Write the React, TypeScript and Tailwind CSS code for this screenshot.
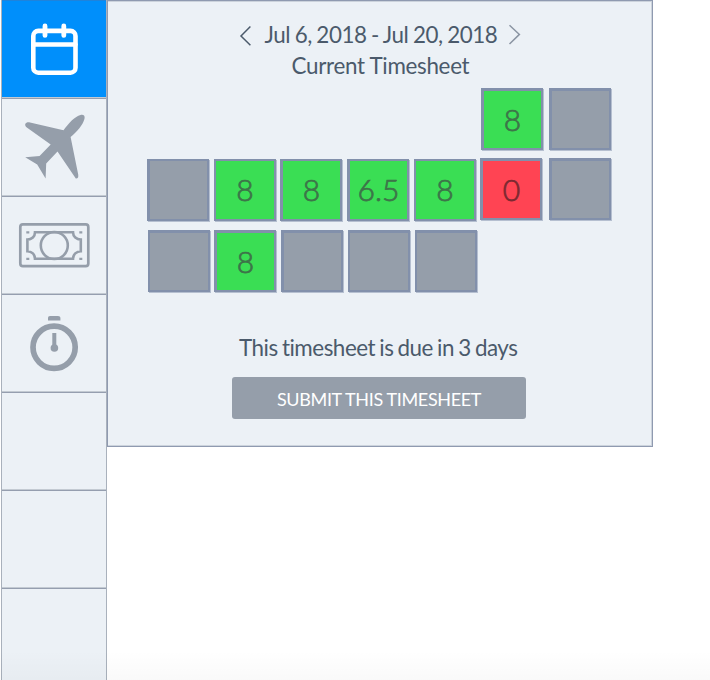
import React from "react";

type Tone = "empty" | "green" | "red";

interface Day {
  tone: Tone;
  hours?: string;
  place: string;
}

const tones: Record<Tone, string> = {
  empty: "bg-[#959eaa]",
  green: "bg-[#3ade54] text-[#3d7449]",
  red: "bg-[#ff4453] text-[#7d2931]",
};

const weeks: { place: string; days: Day[] }[] = [
  {
    place: "ml-[373px]",
    days: [
      { tone: "green", hours: "8", place: "border-2 border-l-[3px] border-t-[3px]" },
      { tone: "empty", place: "border-2 border-l-[3px] border-t-[3px] ml-[6px]" },
    ],
  },
  {
    place: "ml-[39px] mt-2",
    days: [
      { tone: "empty", place: "border-2 border-l-[3px] mt-px" },
      { tone: "green", hours: "8", place: "border-2 mt-px ml-[5px]" },
      { tone: "green", hours: "8", place: "border-2 border-l-[3px] mt-px ml-1" },
      { tone: "green", hours: "6.5", place: "border-2 border-l-[3px] mt-px ml-[5px]" },
      { tone: "green", hours: "8", place: "border-2 mt-px ml-[5px]" },
      { tone: "red", hours: "0", place: "border-2 border-l-[3px] border-t-[3px] ml-1" },
      { tone: "empty", place: "border-2 border-l-[3px] border-t-[3px] ml-[7px]" },
    ],
  },
  {
    place: "ml-10 mt-[9px]",
    days: [
      { tone: "empty", place: "border-2 border-t-[3px]" },
      { tone: "green", hours: "8", place: "border-2 border-l-[3px] border-t-[3px] ml-1" },
      { tone: "empty", place: "border-2 border-l-[3px] border-t-[3px] ml-[5px]" },
      { tone: "empty", place: "border-2 border-t-[3px] ml-[5px]" },
      { tone: "empty", place: "border-2 border-t-[3px] ml-[5px]" },
    ],
  },
];

function CalendarIcon() {
  return (
    <svg width="105" height="96" viewBox="0 0 105 96" fill="none" stroke="#fff" strokeLinecap="round">
      <rect x="31.3" y="29.9" width="42.2" height="41.8" rx="5" strokeWidth="4.6" />
      <path d="M31.5 43.4H73.5" strokeWidth="4.5" />
      <path d="M43 24.9V34.4M61.8 24.9V34.4" strokeWidth="4.8" />
    </svg>
  );
}

function PlaneIcon() {
  return (
    <svg width="105" height="96" viewBox="2 99 105 96" fill="#959eaa">
      <path d="M25.2 124.3C26 122.4 28 122 30 122.5L63.5 130.3C69 122.8 75 116.3 80.5 115C83.5 114.3 85.2 115.6 84.5 118.7C83 125 77 131.5 70.6 137L78.2 174.5C78.6 177 78 178.8 75.8 178.6L57.5 151.5L46.2 163.5L45.6 178.5L37.2 164.6L25.2 157.2L39.6 156.1L50.7 144.4L26.8 127.4C25.6 126.5 25 125.4 25.2 124.3Z" />
    </svg>
  );
}

function MoneyIcon() {
  return (
    <svg width="105" height="96" viewBox="2 197 105 96" fill="none" stroke="#959eaa">
      <rect x="20.3" y="224.3" width="68" height="41.8" rx="2.6" strokeWidth="2.7" />
      <path d="M35 232.3H73C73 236.4 76.5 239.6 80.8 239.6V251.2C76.5 251.2 73 254.6 73 258.8H35C35 254.6 31.8 251.2 27.4 251.2V239.6C31.8 239.6 35 236.4 35 232.3Z" strokeWidth="2.6" />
      <circle cx="54.3" cy="245.5" r="13.5" strokeWidth="2.6" />
      <path d="M26.3 232.3h3M79.3 232.3h3M26.3 258.8h3M79.3 258.8h3" strokeWidth="2.3" />
    </svg>
  );
}

function StopwatchIcon() {
  return (
    <svg width="105" height="96" viewBox="2 295 105 96" fill="none" stroke="#959eaa">
      <circle cx="54.1" cy="347.3" r="21.1" strokeWidth="5.7" />
      <path d="M54.3 333V347" strokeWidth="4" />
      <circle cx="54.4" cy="348" r="3.8" fill="#959eaa" stroke="none" />
      <path d="M48 320.5V317.5Q48 316 50 316H58Q60.4 316 60.4 317.7V320.5Z" fill="#959eaa" stroke="none" />
    </svg>
  );
}

function NavCell({ children }: { children?: React.ReactNode }) {
  return (
    <div className="h-[98px] shrink-0 border-t border-[#c3cad2]">
      <div className="h-[97px] border-t border-[#959eaf]">{children}</div>
    </div>
  );
}

function DayCell({ day }: { day: Day }) {
  return (
    <div className={`flex h-[62px] w-[62px] shrink-0 items-center justify-center border-[#8290ab] shadow-[1px_1px_0_#b5bfd0] ${tones[day.tone]} ${day.place}`}>
      {day.hours && <span className="pb-[2px] font-['Lato'] text-[30px] leading-none font-light [-webkit-text-stroke:0.75px_currentColor]">{day.hours}</span>}
    </div>
  );
}

export default function App() {
  return (
    <div className="relative flex h-[680px] w-[710px] overflow-hidden bg-white font-['Lato',sans-serif] text-[#4b5a6b] [font-variant-ligatures:none]">
      <nav className="ml-px flex h-[680px] w-[106px] shrink-0 flex-col overflow-hidden border-x border-[#a9b1bc] bg-[#ecf1f6]">
        <div className="h-[97px] shrink-0 border-t border-[#1f83db] bg-[#008ffb]">
          <CalendarIcon />
        </div>
        <NavCell><PlaneIcon /></NavCell>
        <NavCell><MoneyIcon /></NavCell>
        <NavCell><StopwatchIcon /></NavCell>
        <NavCell />
        <NavCell />
        <NavCell />
      </nav>
      <main className="flex h-[447px] w-[546px] shrink-0 flex-col border border-[#8f9ab0] bg-[#ecf1f6] shadow-[inset_-1px_-1px_0_#ccd3dc,inset_0_1px_0_#ccd3dc]">
        <header className="mt-[19px] flex h-[60px] flex-col">
          <div className="flex h-[30px] items-center">
            <svg className="ml-[131px] shrink-0" width="14" height="22" viewBox="0 0 14 22" fill="none" stroke="#4b5a6b" strokeWidth="1.5">
              <path d="M11.4 2.5L2 12L11.4 21.2" />
            </svg>
            <span className="ml-[11.5px] w-[233px] whitespace-nowrap text-[22.4px] leading-[30px] tracking-[-0.43px] [word-spacing:-0.8px]">Jul 6, 2018 - Jul 20, 2018</span>
            <svg className="ml-[10px] shrink-0" width="14" height="22" viewBox="0 0 14 22" fill="none" stroke="#8b95a3" strokeWidth="1.5">
              <path d="M1.5 1.2L11.4 10.4L1.5 20" />
            </svg>
          </div>
          <div className="mt-px ml-[183.5px] whitespace-nowrap text-[22.4px] leading-[30px] tracking-[-0.3px]">Current Timesheet</div>
        </header>
        <section className="mt-2 flex flex-col">
          {weeks.map((week, w) => (
            <div key={w} className={`flex ${week.place}`}>
              {week.days.map((day, d) => <DayCell key={d} day={day} />)}
            </div>
          ))}
        </section>
        <p className="mt-[41px] ml-[131px] whitespace-nowrap text-[22.4px] leading-[30px] tracking-[-0.47px] [word-spacing:-1.1px]">This timesheet is due in 3 days</p>
        <button className="mt-[14px] ml-[124px] flex h-[42px] w-[294px] items-center justify-center rounded-[3px] bg-[#959eaa] pt-px text-[18px] leading-none text-white">
          <span className="whitespace-nowrap tracking-[-0.35px]">SUBMIT THIS TIMESHEET</span>
        </button>
      </main>
      <div className="pointer-events-none absolute bottom-0 left-0 h-[30px] w-full bg-gradient-to-b from-transparent to-black/[0.022]" />
    </div>
  );
}
